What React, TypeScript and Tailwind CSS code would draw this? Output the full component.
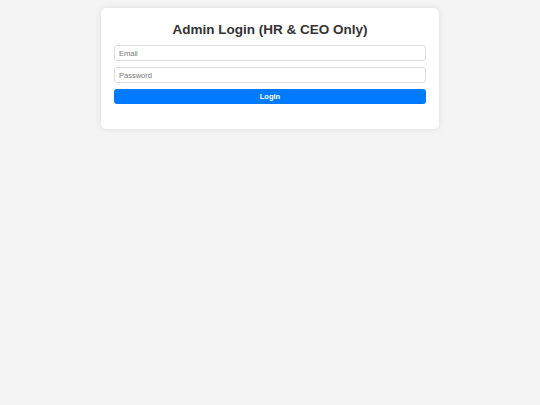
import React, { useState } from "react";

export default function App() {
  const [email, setEmail] = useState("");
  const [password, setPassword] = useState("");

  return (
    <div
      className="min-h-[405px] w-full bg-[#f4f4f4] pt-2"
      style={{ fontFamily: '"Liberation Sans", Arial, sans-serif' }}
    >
      <div className="mx-auto w-[338px] rounded-[5px] bg-white px-[13px] pt-[13.5px] pb-[25px] shadow-[0_0_6px_rgba(0,0,0,0.1)]">
        <h2 className="mb-[8px] text-center text-[13.5px] font-bold leading-[15.5px] text-[#333]">
          Admin Login (HR &amp; CEO Only)
        </h2>
        <form className="flex flex-col gap-[6px]" onSubmit={(e) => e.preventDefault()}>
          <input
            type="email"
            placeholder="Email"
            value={email}
            onChange={(e) => setEmail(e.target.value)}
            className="h-[16px] w-full rounded-[3px] border border-[#ddd] px-[4px] text-[7.5px] text-[#333] outline-none placeholder:text-[#777]"
          />
          <input
            type="password"
            placeholder="Password"
            value={password}
            onChange={(e) => setPassword(e.target.value)}
            className="h-[16px] w-full rounded-[3px] border border-[#ddd] px-[4px] text-[7.5px] text-[#333] outline-none placeholder:text-[#777]"
          />
          <button
            type="submit"
            className="h-[15px] w-full rounded-[3px] bg-[#007bff] text-[7.5px] font-bold text-white"
          >
            Login
          </button>
        </form>
      </div>
    </div>
  );
}
